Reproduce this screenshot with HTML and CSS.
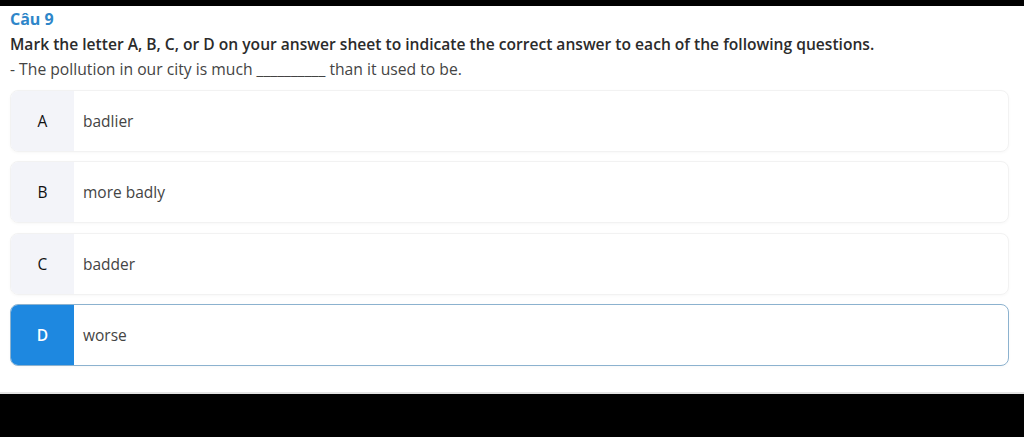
FILE: index.html
```html
<!DOCTYPE html>
<html lang="vi">
  <head>
    <title>Câu 9</title>
    <meta charset="UTF-8" />
    <meta name="viewport" content="width=device-width, initial-scale=1" />
    <link rel="stylesheet" href="styles.css">
  </head>
  <body>
    <div class="topBar"></div>
    <div class="question">
      <div class="qTitle">Câu 9</div>
      <div class="qText">Mark the letter A, B, C, or D on your answer sheet to indicate the correct answer to each of the following questions.</div>
      <div class="qSentence">- The pollution in our city is much __________ than it used to be.</div>
      <div class="options">
        <div class="option">
          <div class="letter">A</div>
          <div class="answer">badlier</div>
        </div>
        <div class="option">
          <div class="letter">B</div>
          <div class="answer">more badly</div>
        </div>
        <div class="option">
          <div class="letter">C</div>
          <div class="answer">badder</div>
        </div>
        <div class="option active">
          <div class="letter">D</div>
          <div class="answer">worse</div>
        </div>
      </div>
    </div>
    <div class="bottomBar"></div>
  </body>
</html>
```

FILE: styles.css
```css
body {
  margin: 0;
  padding: 0;
  background: #fff;
  font-family: "Open Sans", "Noto Sans", sans-serif;
  height: 437px;
  display: flex;
  flex-direction: column;
  overflow: hidden;
}
.topBar {
  height: 6px;
  background: #000;
}
.question {
  flex: 1;
  padding: 4px 15px 0 10px;
  border-bottom: 2px solid #e4e4e4;
}
.qTitle {
  color: #2e86c9;
  font-weight: 700;
  font-size: 16px;
  line-height: 18px;
}
.qText {
  margin-top: 5px;
  color: #2b2b2b;
  font-weight: 600;
  font-size: 15.6px;
  line-height: 22px;
}
.qSentence {
  margin-top: 4px;
  color: #444;
  font-size: 15.7px;
  line-height: 20px;
}
.options {
  margin-top: 11px;
  display: flex;
  flex-direction: column;
  gap: 9.3px;
}
.option {
  display: flex;
  height: 60px;
  border: 1px solid #f2f2f2;
  border-radius: 8px;
  box-shadow: 0 1px 3px rgba(0, 0, 0, 0.03);
  overflow: hidden;
}
.letter {
  width: 63px;
  flex: none;
  display: flex;
  align-items: center;
  justify-content: center;
  background: #f3f4f9;
  color: #111;
  font-size: 15.5px;
}
.answer {
  display: flex;
  align-items: center;
  padding-left: 9px;
  color: #444;
  font-size: 15.5px;
}
.option.active {
  border-color: #8cb2cf;
}
.option.active .letter {
  background: #1e88e0;
  color: #fff;
  font-weight: 600;
}
.bottomBar {
  height: 43px;
  background: #000;
}
```
